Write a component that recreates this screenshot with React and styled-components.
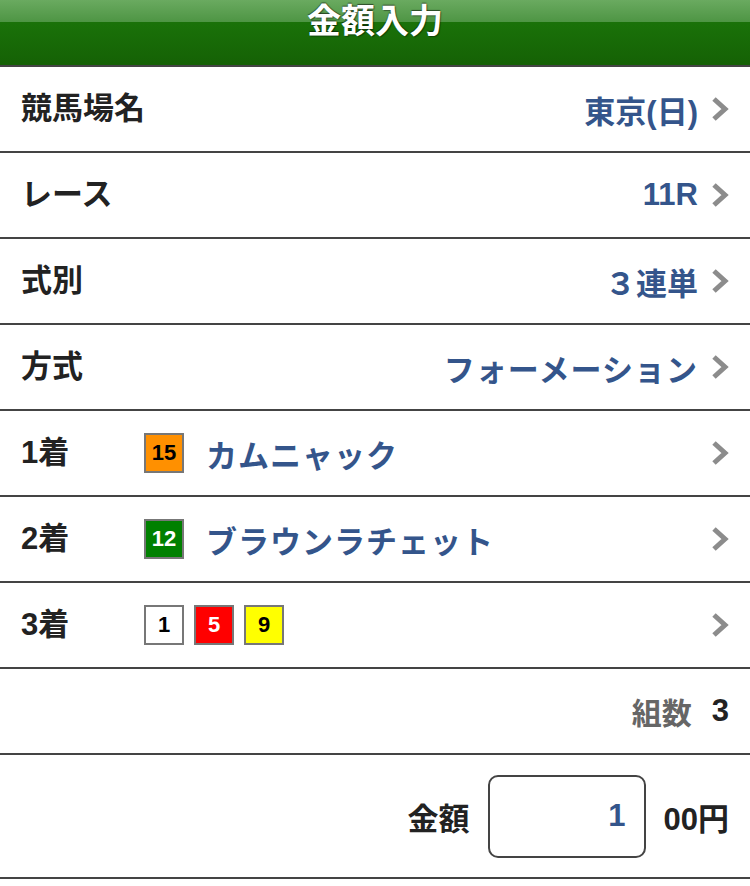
import React from 'react';
import styled, { createGlobalStyle } from 'styled-components';

const GlobalStyle = createGlobalStyle`
  body {
    margin: 0;
    background: #fff;
    font-family: "Liberation Sans", "Noto Sans CJK JP", sans-serif;
  }
`;

const Page = styled.div`
  width: 750px;
  display: flex;
  flex-direction: column;
`;

const Header = styled.header`
  height: 65px;
  border-bottom: 2px solid #444;
  background: linear-gradient(to bottom, #6aaa60 0px, #4e9544 22px, #1a7209 22px, #156105 65px);
  display: flex;
  justify-content: center;
  align-items: flex-start;
`;

const Title = styled.h1`
  margin: 0;
  padding-top: 1px;
  font-size: 34px;
  line-height: 40px;
  font-weight: bold;
  color: #fff;
  text-shadow: 0 -1px 1px rgba(0, 0, 0, 0.55), 1px 1px 1px rgba(0, 0, 0, 0.4);
`;

const Row = styled.div`
  height: ${(p) => p.$h || 84}px;
  border-bottom: 2px solid #444;
  display: flex;
  align-items: center;
  padding: 0 21px;
  gap: ${(p) => p.$gap || 0}px;
  justify-content: ${(p) => (p.$end ? 'flex-end' : 'flex-start')};
`;

const Label = styled.div`
  font-size: 31px;
  font-weight: bold;
  color: #222;
  width: ${(p) => p.$w || 'auto'};
  flex: ${(p) => (p.$w ? 'none' : '1')};
  padding-bottom: 8px;
`;

const Value = styled.div`
  font-size: 31px;
  font-weight: bold;
  color: #34558b;
  letter-spacing: ${(p) => (p.$kana ? '1px' : '0')};
  flex: none;
`;

const Chevron = styled.svg`
  width: 18px;
  height: 26px;
  margin-left: 13px;
  flex: none;
`;

const Badges = styled.div`
  display: flex;
  align-items: center;
  gap: 10px;
  flex: 1;
`;

const Badge = styled.span`
  width: 36px;
  height: 36px;
  border: 2px solid #777;
  background: ${(p) => p.$bg};
  color: ${(p) => p.$fg};
  font-size: 22px;
  font-weight: bold;
  display: flex;
  align-items: center;
  justify-content: center;
  flex: none;
`;

const HorseName = styled(Value)`
  margin-left: 22px;
  flex: 1;
`;

const CountLabel = styled.span`
  font-size: 30px;
  font-weight: bold;
  color: #666;
`;

const Strong = styled.span`
  font-size: 31px;
  font-weight: bold;
  color: #222;
`;

const AmountBox = styled.div`
  width: 154px;
  height: 79px;
  border: 2px solid #444;
  border-radius: 10px;
  display: flex;
  align-items: center;
  justify-content: flex-end;
`;

const AmountInput = styled.input`
  width: 100%;
  border: none;
  outline: none;
  background: transparent;
  text-align: right;
  padding-right: 18px;
  font-family: "Liberation Sans", sans-serif;
  font-size: 31px;
  font-weight: bold;
  color: #34558b;
  box-sizing: border-box;
`;

const Arrow = () => (
  <Chevron viewBox="0 0 18 26">
    <path d="M3 3 L14 13 L3 23" fill="none" stroke="#8c8c8c" strokeWidth="5" />
  </Chevron>
);

const waku = {
  1: ['#fff', '#000'],
  5: ['#ff0000', '#fff'],
  9: ['#ffff00', '#000'],
  12: ['#008000', '#fff'],
  15: ['#ff9000', '#000'],
};

const HorseBadge = ({ n }) => (
  <Badge $bg={waku[n][0]} $fg={waku[n][1]}>{n}</Badge>
);

export default function App() {
  return (
    <Page>
      <GlobalStyle />
      <Header>
        <Title>金額入力</Title>
      </Header>
      <Row>
        <Label>競馬場名</Label>
        <Value>東京(日)</Value>
        <Arrow />
      </Row>
      <Row>
        <Label>レース</Label>
        <Value>11R</Value>
        <Arrow />
      </Row>
      <Row>
        <Label>式別</Label>
        <Value>３連単</Value>
        <Arrow />
      </Row>
      <Row>
        <Label>方式</Label>
        <Value $kana>フォーメーション</Value>
        <Arrow />
      </Row>
      <Row>
        <Label $w="123px">1着</Label>
        <HorseBadge n={15} />
        <HorseName $kana>カムニャック</HorseName>
        <Arrow />
      </Row>
      <Row>
        <Label $w="123px">2着</Label>
        <HorseBadge n={12} />
        <HorseName $kana>ブラウンラチェット</HorseName>
        <Arrow />
      </Row>
      <Row>
        <Label $w="123px">3着</Label>
        <Badges>
          <HorseBadge n={1} />
          <HorseBadge n={5} />
          <HorseBadge n={9} />
        </Badges>
        <Arrow />
      </Row>
      <Row $end $gap={20}>
        <CountLabel>組数</CountLabel>
        <Strong>3</Strong>
      </Row>
      <Row $end $h={122} $gap={18}>
        <Strong>金額</Strong>
        <AmountBox>
          <AmountInput defaultValue="1" />
        </AmountBox>
        <Strong>00円</Strong>
      </Row>
    </Page>
  );
}
